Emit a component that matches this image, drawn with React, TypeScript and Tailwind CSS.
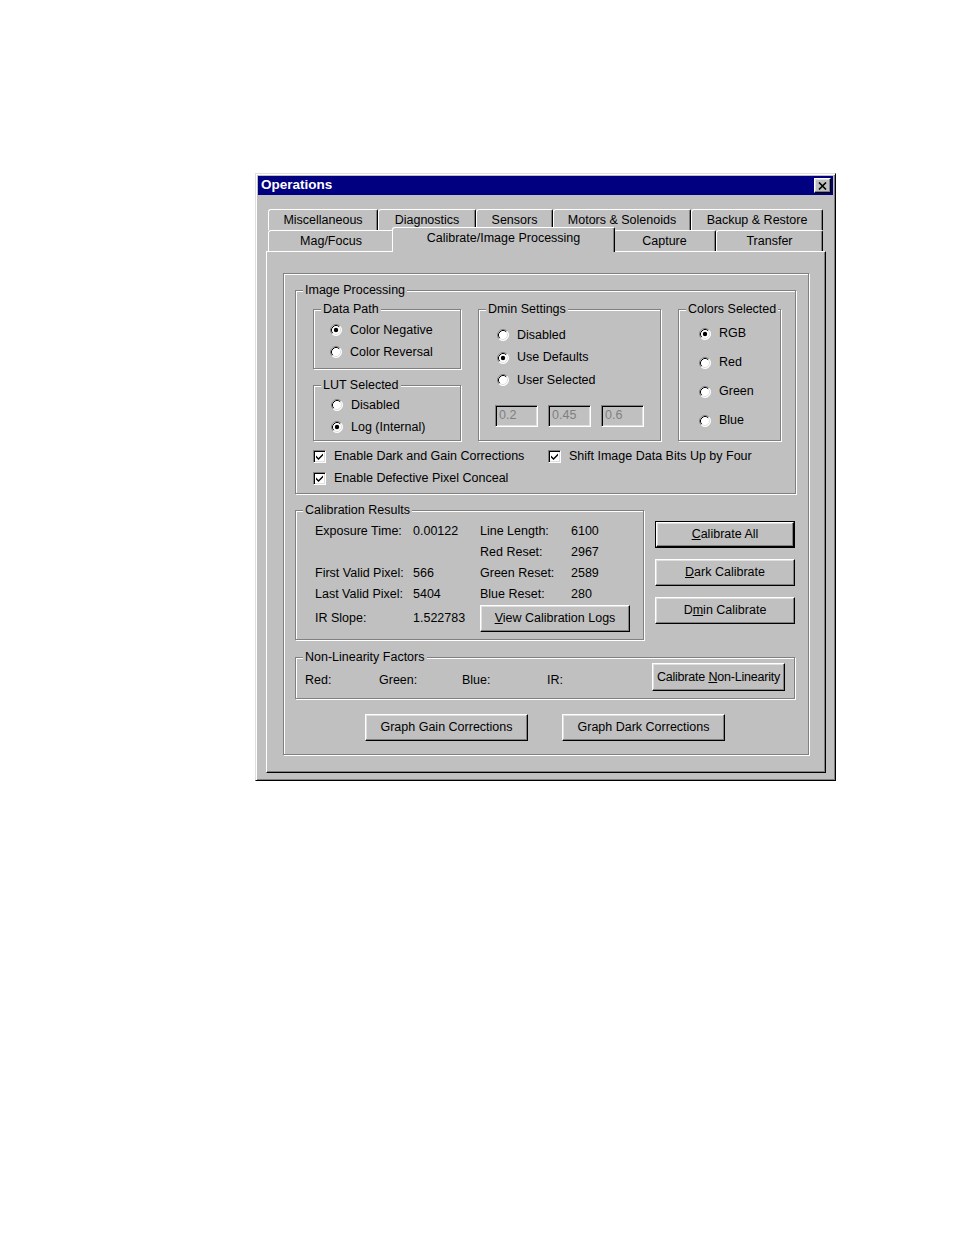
import React from "react";

const RAISED =
  "border border-t-white border-l-white border-r-black border-b-black shadow-[inset_-1px_-1px_0_#808080,inset_1px_1px_0_#dfdfdf]";
const SUNKEN =
  "border border-t-[#808080] border-l-[#808080] border-r-white border-b-white shadow-[inset_1px_1px_0_#000,inset_-1px_-1px_0_#dfdfdf]";
const ETCHED =
  "border border-[#808080] shadow-[1px_1px_0_#fff,inset_1px_1px_0_#fff]";

interface GroupProps {
  title: string;
  className?: string;
  children?: React.ReactNode;
}

const Group: React.FC<GroupProps> = ({ title, className = "", children }) => (
  <div className={`relative ${ETCHED} ${className}`}>
    <span className="absolute -top-[9px] left-[7px] bg-[#c0c0c0] px-[2px] leading-[16px] whitespace-nowrap">
      {title}
    </span>
    {children}
  </div>
);

const Radio: React.FC<{ label: string; checked?: boolean; className?: string }> = ({
  label,
  checked,
  className = "",
}) => (
  <div className={`flex items-center gap-[8px] ${className}`}>
    <svg width="12" height="12" viewBox="0 0 12 12" className="shrink-0">
      <circle cx="6" cy="6" r="5.5" fill="#fff" />
      <path d="M2.11 9.89A5.5 5.5 0 0 1 9.89 2.11" fill="none" stroke="#808080" />
      <path d="M9.89 2.11A5.5 5.5 0 0 1 2.11 9.89" fill="none" stroke="#fff" />
      <path d="M2.82 9.18A4.5 4.5 0 0 1 9.18 2.82" fill="none" stroke="#000" />
      <path d="M9.18 2.82A4.5 4.5 0 0 1 2.82 9.18" fill="none" stroke="#dfdfdf" />
      {checked && <circle cx="6" cy="6" r="2.2" fill="#000" />}
    </svg>
    <span className="whitespace-nowrap">{label}</span>
  </div>
);

const Check: React.FC<{ label: string; className?: string }> = ({ label, className = "" }) => (
  <div className={`flex items-center gap-[8px] ${className}`}>
    <span className={`flex h-[13px] w-[13px] shrink-0 items-center justify-center bg-white ${SUNKEN}`}>
      <svg width="7" height="7" viewBox="0 0 7 7">
        <polygon points="0,2.5 2.5,5 7,0.5 7,2.5 2.5,7 0,4.5" fill="#000" />
      </svg>
    </span>
    <span className="whitespace-nowrap">{label}</span>
  </div>
);

const Btn: React.FC<{ className?: string; isDefault?: boolean; children: React.ReactNode }> = ({
  className = "",
  isDefault,
  children,
}) =>
  isDefault ? (
    <div className={`border border-black ${className}`}>
      <button type="button" className={`flex h-full w-full items-center justify-center whitespace-nowrap bg-[#c0c0c0] ${RAISED}`}>
        <span>{children}</span>
      </button>
    </div>
  ) : (
    <button type="button" className={`flex items-center justify-center whitespace-nowrap bg-[#c0c0c0] ${RAISED} ${className}`}>
      <span>{children}</span>
    </button>
  );

const Field: React.FC<{ value: string }> = ({ value }) => (
  <div className={`flex h-[22px] w-[43px] items-center bg-[#c0c0c0] pl-[3px] text-[#808080] ${SUNKEN}`}>
    {value}
  </div>
);

const BACK_TABS = [
  { label: "Miscellaneous", w: "w-[110px]" },
  { label: "Diagnostics", w: "w-[98px]" },
  { label: "Sensors", w: "w-[77px]" },
  { label: "Motors & Solenoids", w: "w-[138px]" },
  { label: "Backup & Restore", w: "w-[132px]" },
];

const TAB =
  "flex items-center justify-center whitespace-nowrap border-t border-l border-r border-t-white border-l-white border-r-black shadow-[inset_-1px_0_0_#808080] rounded-tl-[3px] rounded-tr-[2px]";

export default function App() {
  return (
    <div className="min-h-[1235px] w-[954px] bg-white pl-[255px] pt-[173px] font-['Liberation_Sans',Arial,sans-serif] text-[12.5px] text-black">
      <div className="h-[608px] w-[581px] border border-t-[#dfdfdf] border-l-[#dfdfdf] border-r-black border-b-black bg-[#c0c0c0] p-[2px] shadow-[inset_1px_1px_0_#fff,inset_-1px_-1px_0_#808080]">
        {/* title bar */}
        <div className="flex h-[19px] items-center justify-between bg-[#000080] pl-[3px] pr-[2px]">
          <span className="text-[13.5px] font-bold text-white">Operations</span>
          <button type="button" className={`flex h-[15px] w-[17px] items-center justify-center bg-[#c0c0c0] ${RAISED}`}>
            <svg width="9" height="8" viewBox="0 0 9 8">
              <path d="M1 0.5L8 7.5M8 0.5L1 7.5" stroke="#000" strokeWidth="1.6" />
            </svg>
          </button>
        </div>

        <div className="ml-[8px] mt-[14px]">
          <div className="ml-[2px] flex h-[21px]">
            {BACK_TABS.map((t) => (
              <div key={t.label} className={`${TAB} ${t.w} h-[21px]`}>
                {t.label}
              </div>
            ))}
          </div>
          <div className="ml-[2px] flex h-[21px] items-end">
            <div className={`${TAB} h-[21px] w-[126px]`}>Mag/Focus</div>
            <div className={`${TAB} relative z-10 -mx-[2px] -mb-px h-[25px] w-[223px] bg-[#c0c0c0] pb-[3px]`}>
              Calibrate/Image Processing
            </div>
            <div className={`${TAB} h-[21px] w-[103px]`}>Capture</div>
            <div className={`${TAB} h-[21px] w-[107px]`}>Transfer</div>
          </div>

          {/* tab panel */}
          <div className="h-[522px] w-[560px] border border-t-white border-l-white border-r-black border-b-black pl-[16px] pt-[21px] shadow-[inset_-1px_-1px_0_#808080]">
            <div className={`h-[482px] w-[526px] pl-[11px] pt-[16px] ${ETCHED}`}>
              <Group title="Image Processing" className="h-[204px] w-[501px] pl-[17px] pt-[18px]">
                <div className="flex gap-[17px]">
                  <div className="flex w-[148px] flex-col">
                    <Group title="Data Path" className="h-[60px] pl-[16px] pt-[9px]">
                      <Radio className="h-[22px]" label="Color Negative" checked />
                      <Radio className="h-[22px]" label="Color Reversal" />
                    </Group>
                    <Group title="LUT Selected" className="mt-[16px] h-[56px] pl-[17px] pt-[8px]">
                      <Radio className="h-[22px]" label="Disabled" />
                      <Radio className="h-[22px]" label="Log (Internal)" checked />
                    </Group>
                  </div>
                  <Group title="Dmin Settings" className="h-[132px] w-[183px] pl-[18px] pt-[14px]">
                    <Radio className="h-[22.5px]" label="Disabled" />
                    <Radio className="h-[22.5px]" label="Use Defaults" checked />
                    <Radio className="h-[22.5px]" label="User Selected" />
                    <div className="-ml-[2px] mt-[13px] flex gap-[10px]">
                      <Field value="0.2" />
                      <Field value="0.45" />
                      <Field value="0.6" />
                    </div>
                  </Group>
                  <Group title="Colors Selected" className="h-[132px] w-[103px] pl-[20px] pt-[9px]">
                    <Radio className="h-[29px]" label="RGB" checked />
                    <Radio className="h-[29px]" label="Red" />
                    <Radio className="h-[29px]" label="Green" />
                    <Radio className="h-[29px]" label="Blue" />
                  </Group>
                </div>
                <div className="mt-[4px]">
                  <div className="flex h-[22px] items-center">
                    <Check className="w-[235px]" label="Enable Dark and Gain Corrections" />
                    <Check label="Shift Image Data Bits Up by Four" />
                  </div>
                  <div className="flex h-[22px] items-center">
                    <Check label="Enable Defective Pixel Conceal" />
                  </div>
                </div>
              </Group>

              <div className="mt-[16px] flex">
                <Group title="Calibration Results" className="h-[130px] w-[349px] pl-[19px] pt-[10px]">
                  <div className="grid grid-cols-[98px_67px_91px_1fr] grid-rows-[21px_21px_21px_21px_27px] items-center whitespace-nowrap">
                    <span>Exposure Time:</span>
                    <span>0.00122</span>
                    <span>Line Length:</span>
                    <span>6100</span>
                    <span />
                    <span />
                    <span>Red Reset:</span>
                    <span>2967</span>
                    <span>First Valid Pixel:</span>
                    <span>566</span>
                    <span>Green Reset:</span>
                    <span>2589</span>
                    <span>Last Valid Pixel:</span>
                    <span>5404</span>
                    <span>Blue Reset:</span>
                    <span>280</span>
                    <span>IR Slope:</span>
                    <span>1.522783</span>
                    <div className="col-span-2">
                      <Btn className="h-[27px] w-[150px]">
                        <u>V</u>iew Calibration Logs
                      </Btn>
                    </div>
                  </div>
                </Group>
                <div className="ml-[11px] mt-[11px] flex flex-col gap-[11px]">
                  <Btn isDefault className="h-[27px] w-[140px]">
                    <u>C</u>alibrate All
                  </Btn>
                  <Btn className="h-[27px] w-[140px]">
                    <u>D</u>ark Calibrate
                  </Btn>
                  <Btn className="h-[27px] w-[140px]">
                    D<u>m</u>in Calibrate
                  </Btn>
                </div>
              </div>

              <Group title="Non-Linearity Factors" className="mt-[17px] flex h-[42px] w-[500px] items-start pl-[9px] pt-[5px]">
                <span className="mt-[3px] w-[74px] leading-[28px]">Red:</span>
                <span className="mt-[3px] w-[83px] leading-[28px]">Green:</span>
                <span className="mt-[3px] w-[85px] leading-[28px]">Blue:</span>
                <span className="mt-[3px] w-[105px] leading-[28px]">IR:</span>
                <Btn className="h-[28px] w-[133px] tracking-[-0.2px]">
                  Calibrate <u>N</u>on-Linearity
                </Btn>
              </Group>

              <div className="ml-[70px] mt-[15px] flex gap-[34px]">
                <Btn className="h-[27px] w-[163px]">Graph Gain Corrections</Btn>
                <Btn className="h-[27px] w-[163px]">Graph Dark Corrections</Btn>
              </div>
            </div>
          </div>
        </div>
      </div>
    </div>
  );
}
